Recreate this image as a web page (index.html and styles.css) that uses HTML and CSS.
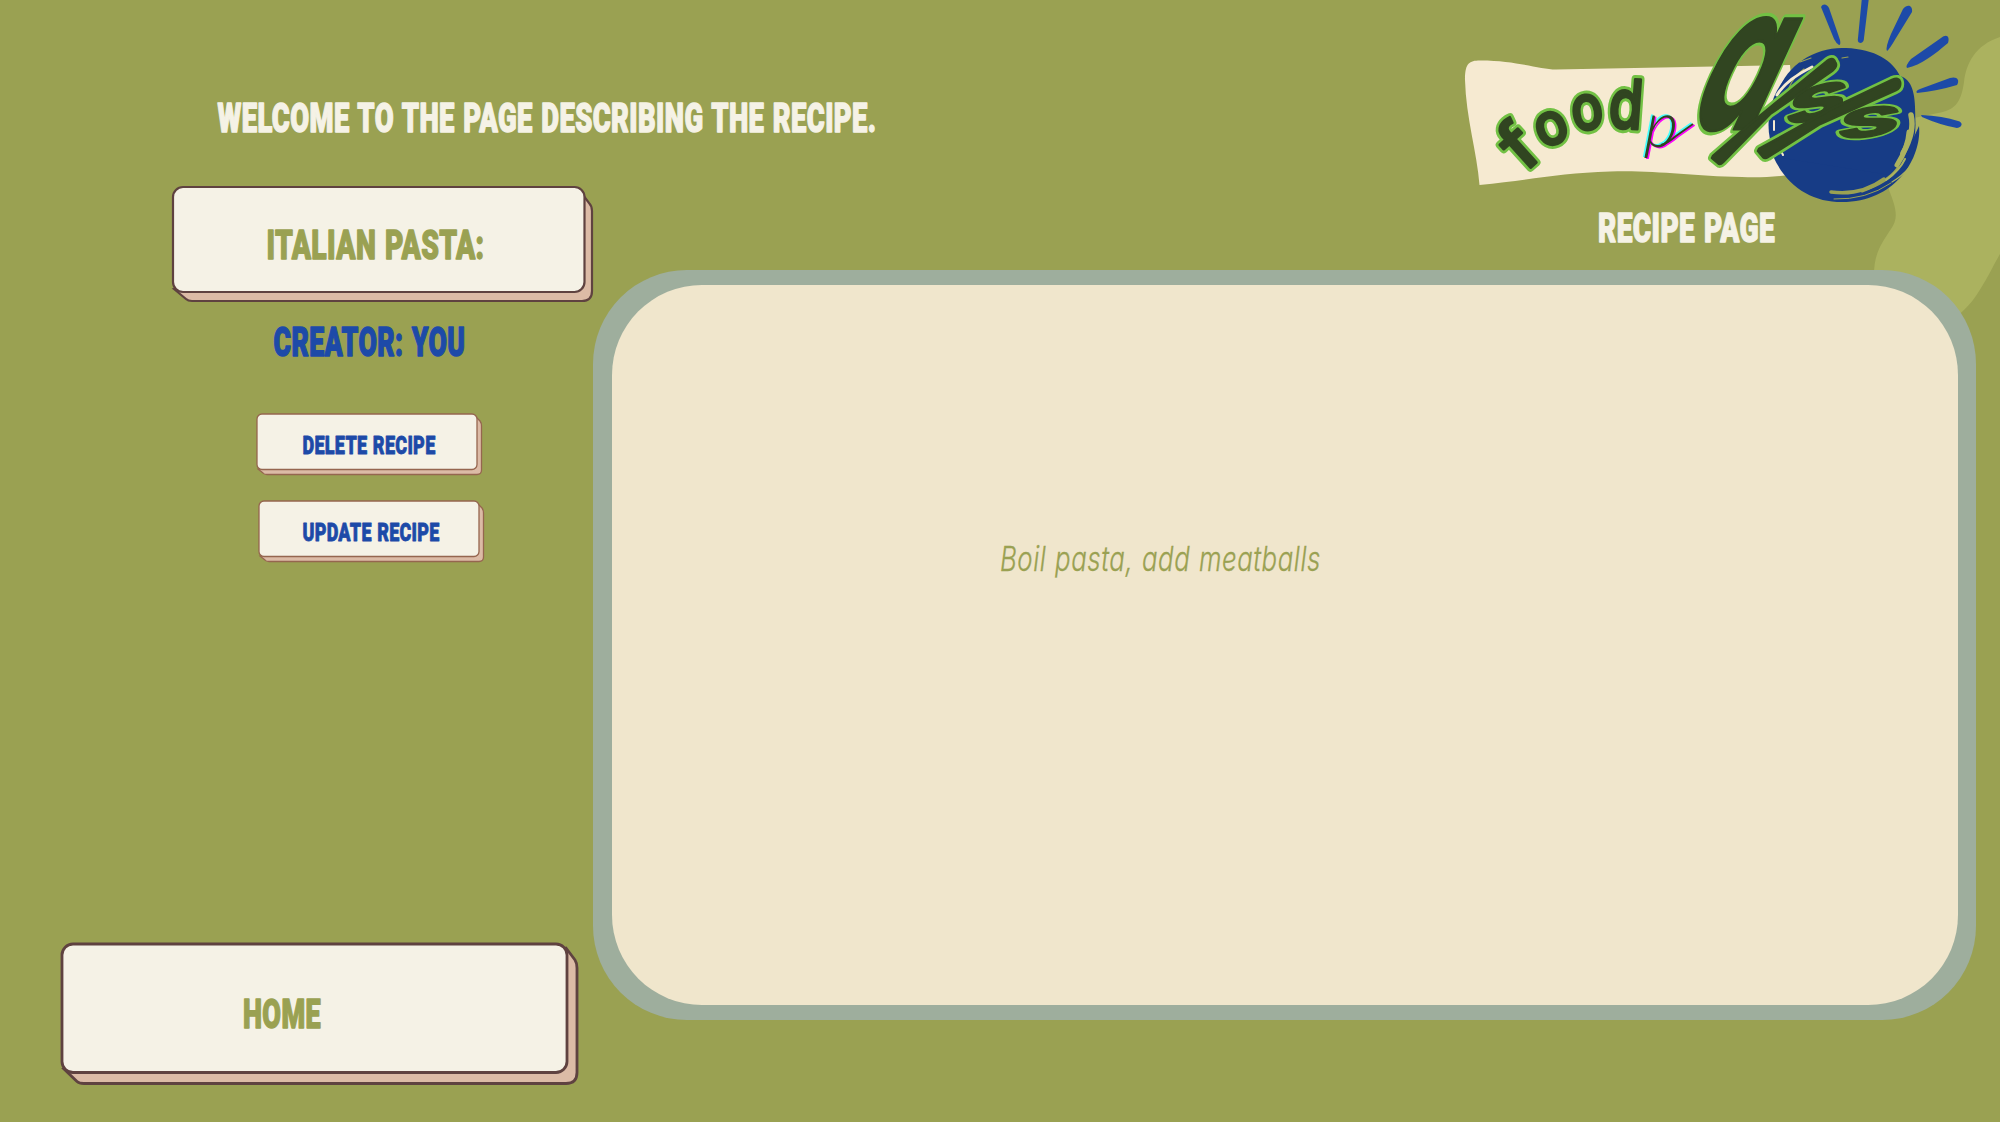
FILE: index.html
```html
<!DOCTYPE html>
<html lang="en">
<head>
<meta charset="utf-8">
<title>Recipe page</title>
<link rel="stylesheet" href="styles.css">
</head>
<body>
<svg class="backdrop" viewBox="0 0 2000 1122" aria-hidden="true">
  <path d="M2000 37C1975 45 1966 64 1964 82C1961 104 1954 110 1938 113L1880 125L1889 190C1896 208 1899 218 1891 229C1881 244 1874 254 1874 275L1940 330C1962 312 1969 308 1981 288C1988 277 1993 266 2000 254Z"/>
</svg>
<div class="page">
  <aside class="side">
    <h1 class="welcome"><svg width="664" height="45"><text class="display cream" x="1.500" y="37" textLength="659" lengthAdjust="spacingAndGlyphs">WELCOME TO THE PAGE DESCRIBING THE RECIPE.</text></svg></h1>
    <h2 class="title-card"><svg width="423" height="119">
      <path class="card-back" d="M3 104L15 114Q17 116 21 116H411Q421 116 421 106V26Q421 21 418 18L409 6Z"/>
      <rect class="card-front" x="2" y="2" width="411.500" height="105" rx="10"/>
      <text class="display olive" x="95.500" y="74" textLength="218" lengthAdjust="spacingAndGlyphs">ITALIAN PASTA:</text>
    </svg></h2>
    <p class="creator"><svg width="194" height="60"><text class="display blue" x="1.500" y="52" textLength="192" lengthAdjust="spacingAndGlyphs">CREATOR: YOU</text></svg></p>
    <button class="small-button"><svg width="230" height="64">
      <path class="card-back thin" d="M3 57L8 61Q9 62.500 12 62.500H222Q226.500 62.500 226.500 58V14Q226.500 11 225 9L220 4Z"/>
      <rect class="card-front thin" x="2" y="2" width="220" height="55.500" rx="5"/>
      <text class="display small blue" x="47.500" y="42" textLength="133" lengthAdjust="spacingAndGlyphs">DELETE RECIPE</text>
    </svg></button>
    <button class="small-button update"><svg width="230" height="64">
      <path class="card-back thin" d="M3 57L8 61Q9 62.500 12 62.500H222Q226.500 62.500 226.500 58V14Q226.500 11 225 9L220 4Z"/>
      <rect class="card-front thin" x="2" y="2" width="220" height="55.500" rx="5"/>
      <text class="display small blue" x="45.500" y="42" textLength="137" lengthAdjust="spacingAndGlyphs">UPDATE RECIPE</text>
    </svg></button>
    <button class="home-button"><svg width="520" height="144">
      <path class="card-back wide" d="M4 127L17 139.500Q19 141.500 24 141.500H506Q517 141.500 517 130.500V26Q517 21 515 18L506 6Z"/>
      <rect class="card-front wide" x="2" y="2" width="505" height="128.500" rx="11"/>
      <text class="display olive" x="183" y="86" textLength="78" lengthAdjust="spacingAndGlyphs">HOME</text>
    </svg></button>
  </aside>
  <main class="main">
    <header class="brand">
      <svg class="logo" width="510" height="205" viewBox="1460 0 510 205">
        <path class="banner" d="M1465 80C1465 65 1468 61 1478 60.500C1514 60 1538 69 1556 69.500L1790 65L1800 174C1780 176 1763 178 1742 177C1690 176 1655 170 1610 171.500C1560 173 1530 180 1479.500 185C1477 152 1466 118 1465 80Z"/>
        <g class="rays">
          <path d="M1821 7C1823 3 1827 4 1829 8L1840 40Q1841 45 1839 45Q1836 43 1834 39Z"/>
          <path d="M1862-3L1858 38Q1857 43 1861 43Q1864 42 1864 38L1869-3Z"/>
          <path d="M1903 9C1908 3 1913 6 1912 12L1896 38Q1889 50 1887 51Q1885 48 1891 34Z"/>
          <path d="M1941 38C1947 33 1950 37 1948 43C1935 54 1921 65 1907 68Q1905 66 1911 59Z"/>
          <path d="M1950 78C1957 76 1960 80 1957 85Q1937 91 1917 93Q1915 91 1920 89Z"/>
          <path d="M1921 115Q1943 116 1958 121C1963 122 1963 127 1957 128Q1940 125 1922 117Z"/>
        </g>
        <circle class="sun" cx="1842" cy="125" r="73.500"/>
        <path class="sun" d="M1775 110C1776 70 1812 46 1846 48C1875 49 1893 61 1900 76C1914 80 1916 98 1915 124L1908 110Z"/>
        <path class="sun" d="M1919 126C1922 155 1898 202 1842 202C1812 202 1787 187 1773 156L1795 160L1890 175Q1909 150 1919 126Z"/>
        <g class="bristle olive-stroke">
          <path d="M1831 192Q1861 196 1884 179" stroke-width="3.500"/>
          <path d="M1834 199Q1866 200 1891 183" stroke-width="1"/>
          <path d="M1862 191Q1888 182 1898 168" stroke-width="3"/>
          <path d="M1789 88Q1793 77 1804 69" stroke-width="1.200"/>
          <path d="M1800 62L1811 58M1842 58L1848 57" stroke-width="1.200"/>
        </g>
        <g class="bristle light-stroke">
          <path d="M1911 115Q1915 132 1903 153" stroke-width="5.500"/>
          <path d="M1909 132Q1908 148 1897 165" stroke-width="5"/>
          <path d="M1919 150Q1912 170 1892 182" stroke-width="1.200"/>
          <path d="M1905 159Q1900 170 1886 180" stroke-width="2"/>
        </g>
        <g class="bristle cream-stroke">
          <path d="M1777 95Q1787 79 1812 67" stroke-width="3"/>
          <path d="M1774 121L1774 130M1781 151L1783 155" stroke-width="2"/>
        </g>
        <defs>
          <g id="food">
            <text class="round" transform="translate(1515 142) rotate(-42) scale(1.350 1.280)" y="23">f</text>
            <text class="round" transform="translate(1551 127) rotate(-22) scale(1 1.080)" y="16">o</text>
            <text class="round" transform="translate(1587 111) rotate(-8) scale(.98 1.160)" y="16">o</text>
            <text class="round" transform="translate(1626 108) rotate(4) scale(1.020 1.260)" y="16">d</text>
          </g>
          <g id="script">
            <text class="brush" transform="matrix(1.220 0 -.930 2.020 1682 129)">a</text>
            <text class="brush" transform="matrix(1.080 -.260 -.180 .640 1782 127)">s</text>
            <text class="brush" transform="matrix(1.120 -.120 -.150 .540 1834 140)">s</text>
            <path d="M1713 156L1750 124L1826 62Q1833 56 1835 62Q1838 66 1832 71L1770 114L1723 162Q1720 165 1718 163L1712 158Z"/>
            <path d="M1759 149L1835 107L1892 80Q1899 77 1900 82Q1901 88 1896 90L1820 124L1768 157Q1765 159 1763 157L1758 151Z"/>
          </g>
          <g id="letter-p">
            <text class="fine" transform="translate(1644 147) skewX(-4)">p</text>
            <path d="M1661 145Q1668 143 1676 136L1693 124"/>
          </g>
        </defs>
        <use class="lime" href="#food"/>
        <use class="forest" href="#food"/>
        <use class="cyan" href="#letter-p" x="-1.500" y="-1"/>
        <use class="magenta" href="#letter-p" x="1.500" y="1"/>
        <use class="ink" href="#letter-p"/>
        <use class="lime" href="#script"/>
        <use class="forest" href="#script"/>
      </svg>
      <h2 class="page-name"><svg width="178" height="50"><text class="display cream" x="1" y="37" textLength="177" lengthAdjust="spacingAndGlyphs">RECIPE PAGE</text></svg></h2>
    </header>
    <section class="panel">
      <div class="recipe"><svg width="340" height="60"><text class="hand" x="6" y="37" textLength="321" lengthAdjust="spacingAndGlyphs">Boil pasta, add meatballs</text></svg></div>
    </section>
  </main>
</div>
</body>
</html>
```
FILE: styles.css
```css
* { box-sizing: border-box; }
body {
  margin: 0;
  width: 2000px;
  height: 1122px;
  overflow: hidden;
  background: #9aa152;
  font-family: Roboto, "Liberation Sans", sans-serif;
}
svg { display: block; overflow: visible; }
h1, h2, p { margin: 0; }
button { padding: 0; border: 0; background: none; cursor: pointer; }

.backdrop { position: absolute; inset: 0; z-index: -1; width: 2000px; height: 1122px; fill: #abb25f; }

.page { display: grid; grid-template-columns: 593px 1383px; height: 1122px; }
.side { display: flex; flex-direction: column; align-items: flex-start; padding-top: 95px; }
.welcome { margin-left: 216px; width: 370px; }
.title-card { margin: 45px 0 0 171px; }
.creator { margin-left: 272px; }
.small-button { margin: 48px 0 0 255px; }
.small-button.update { margin: 23px 0 0 257px; }
.home-button { margin: 379px 0 0 60px; }

.display {
  font-family: Roboto, "Liberation Sans", sans-serif;
  font-weight: 900;
  font-size: 41px;
  letter-spacing: .6px;
  word-spacing: 2px;
  stroke-width: 1.4px;
  stroke-linejoin: round;
}
.display.small { font-size: 26.5px; letter-spacing: .4px; word-spacing: 1px; stroke-width: .8px; }
.cream { fill: #f5f2e6; stroke: #f5f2e6; }
.olive { fill: #9aa152; stroke: #9aa152; }
.blue { fill: #1d4aa8; stroke: #1d4aa8; }

.card-front { fill: #f5f2e6; stroke: #5f4240; stroke-width: 2.2px; }
.card-back { fill: #dcbba6; stroke: #5f4240; stroke-width: 2.2px; }
.thin { stroke: #95664f; stroke-width: 1.3px; }
.wide { stroke-width: 2.8px; }

.brand { height: 270px; }
.logo { margin-left: 867px; }
.page-name { margin-left: 1004px; }
.banner { fill: #f6ead1; }
.rays { fill: #1d4aa8; }
.sun { fill: #173c86; }
.bristle { fill: none; stroke-linecap: round; }
.olive-stroke { stroke: #9aa152; }
.light-stroke { stroke: #abb25f; }
.cream-stroke { stroke: #f6ead1; }
.lime { fill: #72c144; stroke: #72c144; stroke-width: 8px; stroke-linejoin: round; }
.forest { fill: #314521; stroke: #314521; stroke-width: 2.6px; stroke-linejoin: round; }
.round { font-family: Inter, sans-serif; font-size: 54px; font-weight: 500; text-anchor: middle; }
.brush { font-family: Inter, sans-serif; font-size: 100px; font-weight: 700; font-feature-settings: "cv11"; }
.round, .brush { vector-effect: non-scaling-stroke; }
.fine { font-family: Lato, sans-serif; font-size: 63px; font-weight: 300; font-style: italic; stroke: none; }
.cyan { fill: #4ff; stroke: #4ff; stroke-width: 2px; }
.magenta { fill: #f0f; stroke: #f0f; stroke-width: 2px; }
.ink { fill: #314521; stroke: #314521; stroke-width: 2px; }
#letter-p path { fill: none; }

.panel {
  height: 750px;
  padding: 15px 18.5px 15px 19px;
  border-radius: 94px;
  background: #9eae9d;
}
.recipe {
  height: 100%;
  padding: 249px 0 0 382px;
  border-radius: 90px;
  background: #f0e6cc;
}
.hand {
  font-family: Inter, Lato, sans-serif;
  font-size: 34px;
  font-weight: 300;
  font-style: italic;
  font-feature-settings: "cv11";
  letter-spacing: .8px;
  word-spacing: 1px;
  fill: #9aa152;
  stroke: #9aa152;
  stroke-width: .3px;
}
```
